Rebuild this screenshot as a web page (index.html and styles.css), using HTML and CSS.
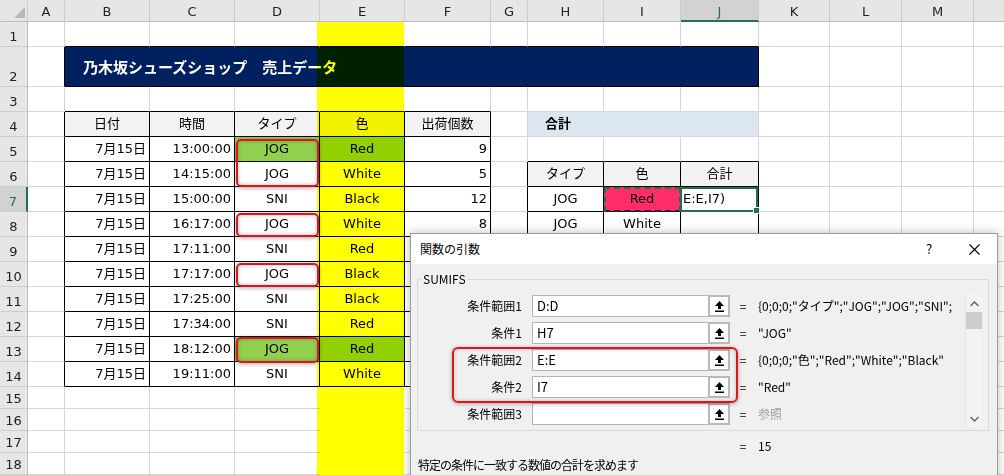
FILE: index.html
```html
<!DOCTYPE html>
<html>
<head>
    <meta charset="utf-8">
    <title>売上データ</title>
    <link rel="stylesheet" href="styles.css">
</head>
<body>
    <table class="sheet">
        <colgroup>
            <col class="w-rh"><col class="w-a"><col class="w-b"><col class="w-b"><col class="w-b"><col class="w-b"><col class="w-f">
            <col class="w-a"><col class="w-h"><col class="w-i"><col class="w-j"><col class="w-k"><col class="w-l"><col class="w-l"><col class="w-l">
        </colgroup>
        <tr class="colhdr">
            <th class="corner"><svg width="11" height="11" viewBox="0 0 11 11"><polygon points="11,0 11,11 0,11" fill="#b8b8b8"/></svg></th>
            <th>A</th><th>B</th><th>C</th><th>D</th><th>E</th><th>F</th><th>G</th><th>H</th><th>I</th><th class="sel">J</th><th>K</th><th>L</th><th>M</th><th></th>
        </tr>
        <tr>
            <th class="rh">1</th>
            <td></td><td class="bb"></td><td class="bb"></td><td class="bb nr"></td><td class="bb nr"></td><td class="bb"></td><td class="bb"></td><td class="bb"></td><td class="bb"></td><td class="bb"></td><td></td><td></td><td></td><td></td>
        </tr>
        <tr class="tall">
            <th class="rh">2</th>
            <td class="br"></td><td class="title" colspan="9">乃木坂シューズショップ　売上データ</td><td></td><td></td><td></td><td></td>
        </tr>
        <tr>
            <th class="rh">3</th>
            <td></td><td class="bb"></td><td class="bb"></td><td class="bb nr"></td><td class="bb nr"></td><td class="bb"></td><td></td><td></td><td></td><td></td><td></td><td></td><td></td><td></td>
        </tr>
        <tr>
            <th class="rh">4</th>
            <td class="br"></td><td class="hd bx">日付</td><td class="hd bx">時間</td><td class="hd bx">タイプ</td><td class="hd bx">色</td><td class="hd bx">出荷個数</td><td></td>
            <td class="sum" colspan="3">合計</td><td></td><td></td><td></td><td></td>
        </tr>
        <tr>
            <th class="rh">5</th>
            <td class="br"></td><td class="r bx">7月15日</td><td class="r bx">13:00:00</td><td class="c bx green">JOG</td><td class="c bx green">Red</td><td class="r bx">9</td><td></td>
            <td class="bb"></td><td class="bb"></td><td class="bb"></td><td></td><td></td><td></td><td></td>
        </tr>
        <tr>
            <th class="rh">6</th>
            <td class="br"></td><td class="r bx">7月15日</td><td class="r bx">14:15:00</td><td class="c bx">JOG</td><td class="c bx">White</td><td class="r bx">5</td><td class="br"></td>
            <td class="hd bx">タイプ</td><td class="hd bx">色</td><td class="hd bx">合計</td><td></td><td></td><td></td><td></td>
        </tr>
        <tr>
            <th class="rh sel">7</th>
            <td class="br"></td><td class="r bx">7月15日</td><td class="r bx">15:00:00</td><td class="c bx">SNI</td><td class="c bx">Black</td><td class="r bx">12</td><td class="br"></td>
            <td class="c bx">JOG</td><td class="c bx pink">Red</td><td class="bx edit">E:E,I7)</td><td></td><td></td><td></td><td></td>
        </tr>
        <tr>
            <th class="rh">8</th>
            <td class="br"></td><td class="r bx">7月15日</td><td class="r bx">16:17:00</td><td class="c bx">JOG</td><td class="c bx">White</td><td class="r bx">8</td><td class="br"></td>
            <td class="c bx">JOG</td><td class="c bx">White</td><td class="bx"></td><td></td><td></td><td></td><td></td>
        </tr>
        <tr>
            <th class="rh">9</th>
            <td class="br"></td><td class="r bx">7月15日</td><td class="r bx">17:11:00</td><td class="c bx">SNI</td><td class="c bx">Red</td><td class="r bx"></td><td></td>
            <td></td><td></td><td></td><td></td><td></td><td></td><td></td>
        </tr>
        <tr>
            <th class="rh">10</th>
            <td class="br"></td><td class="r bx">7月15日</td><td class="r bx">17:17:00</td><td class="c bx">JOG</td><td class="c bx">Black</td><td class="r bx"></td><td></td>
            <td></td><td></td><td></td><td></td><td></td><td></td><td></td>
        </tr>
        <tr>
            <th class="rh">11</th>
            <td class="br"></td><td class="r bx">7月15日</td><td class="r bx">17:25:00</td><td class="c bx">SNI</td><td class="c bx">Black</td><td class="r bx"></td><td></td>
            <td></td><td></td><td></td><td></td><td></td><td></td><td></td>
        </tr>
        <tr>
            <th class="rh">12</th>
            <td class="br"></td><td class="r bx">7月15日</td><td class="r bx">17:34:00</td><td class="c bx">SNI</td><td class="c bx">Red</td><td class="r bx"></td><td></td>
            <td></td><td></td><td></td><td></td><td></td><td></td><td></td>
        </tr>
        <tr>
            <th class="rh">13</th>
            <td class="br"></td><td class="r bx">7月15日</td><td class="r bx">18:12:00</td><td class="c bx green">JOG</td><td class="c bx green">Red</td><td class="r bx"></td><td></td>
            <td></td><td></td><td></td><td></td><td></td><td></td><td></td>
        </tr>
        <tr>
            <th class="rh">14</th>
            <td class="br"></td><td class="r bx">7月15日</td><td class="r bx">19:11:00</td><td class="c bx">SNI</td><td class="c bx">White</td><td class="r bx"></td><td></td>
            <td></td><td></td><td></td><td></td><td></td><td></td><td></td>
        </tr>
        <tr class="short">
            <th class="rh">15</th>
            <td></td><td></td><td></td><td class="nr"></td><td class="ng"></td><td></td><td></td><td></td><td></td><td></td><td></td><td></td><td></td><td></td>
        </tr>
        <tr class="short">
            <th class="rh">16</th>
            <td></td><td></td><td></td><td class="nr"></td><td class="ng"></td><td></td><td></td><td></td><td></td><td></td><td></td><td></td><td></td><td></td>
        </tr>
        <tr class="short">
            <th class="rh">17</th>
            <td></td><td></td><td></td><td class="nr"></td><td class="ng"></td><td></td><td></td><td></td><td></td><td></td><td></td><td></td><td></td><td></td>
        </tr>
        <tr class="short">
            <th class="rh">18</th>
            <td></td><td></td><td></td><td class="nr"></td><td class="ng"></td><td></td><td></td><td></td><td></td><td></td><td></td><td></td><td></td><td></td>
        </tr>
    </table>

    <!-- highlight of column E -->
    <div class="marker"></div>

    <!-- red callouts on JOG -->
    <div class="callout c1"></div>
    <div class="callout c2"></div>
    <div class="callout c3"></div>
    <div class="callout c4"></div>

    <div class="marquee"></div>
    <div class="active"><span class="handle"></span></div>

    <div class="dialog">
        <div class="dlg-title">
            <span class="name">関数の引数</span>
            <span class="help">?</span>
            <span class="close">
                <svg width="11" height="11" viewBox="0 0 11 11"><path d="M0.5 0.5 L10.5 10.5 M10.5 0.5 L0.5 10.5" stroke="#000" stroke-width="1.1"/></svg>
            </span>
        </div>
        <div class="dlg-body">
            <fieldset class="group">
                <legend>SUMIFS</legend>
                <div class="args">
                    <div class="arg-list">
                        <div class="arg">
                            <label>条件範囲1</label>
                            <div class="ref"><span class="ref-text">D:D</span><span class="ref-btn"><svg width="9" height="11" viewBox="0 0 9 11"><path d="M4.5 0 L9 5 L6 5 L6 8 L3 8 L3 5 L0 5 Z M0 9.5 H9 V11 H0 Z" fill="#000"/></svg></span></div>
                            <span class="eq">=</span>
                            <span class="val">{0;0;0;"タイプ";"JOG";"JOG";"SNI";</span>
                        </div>
                        <div class="arg">
                            <label>条件1</label>
                            <div class="ref"><span class="ref-text">H7</span><span class="ref-btn"><svg width="9" height="11" viewBox="0 0 9 11"><path d="M4.5 0 L9 5 L6 5 L6 8 L3 8 L3 5 L0 5 Z M0 9.5 H9 V11 H0 Z" fill="#000"/></svg></span></div>
                            <span class="eq">=</span>
                            <span class="val">"JOG"</span>
                        </div>
                        <div class="arg">
                            <label>条件範囲2</label>
                            <div class="ref"><span class="ref-text">E:E</span><span class="ref-btn"><svg width="9" height="11" viewBox="0 0 9 11"><path d="M4.5 0 L9 5 L6 5 L6 8 L3 8 L3 5 L0 5 Z M0 9.5 H9 V11 H0 Z" fill="#000"/></svg></span></div>
                            <span class="eq">=</span>
                            <span class="val">{0;0;0;"色";"Red";"White";"Black"</span>
                        </div>
                        <div class="arg">
                            <label>条件2</label>
                            <div class="ref"><span class="ref-text">I7</span><span class="ref-btn"><svg width="9" height="11" viewBox="0 0 9 11"><path d="M4.5 0 L9 5 L6 5 L6 8 L3 8 L3 5 L0 5 Z M0 9.5 H9 V11 H0 Z" fill="#000"/></svg></span></div>
                            <span class="eq">=</span>
                            <span class="val">"Red"</span>
                        </div>
                        <div class="arg">
                            <label>条件範囲3</label>
                            <div class="ref"><span class="ref-text"></span><span class="ref-btn"><svg width="9" height="11" viewBox="0 0 9 11"><path d="M4.5 0 L9 5 L6 5 L6 8 L3 8 L3 5 L0 5 Z M0 9.5 H9 V11 H0 Z" fill="#000"/></svg></span></div>
                            <span class="eq">=</span>
                            <span class="val muted">参照</span>
                        </div>
                    </div>
                    <div class="vscroll">
                        <svg class="arrow" width="9" height="6" viewBox="0 0 9 6"><path d="M0.5 5 L4.5 1 L8.5 5" fill="none" stroke="#606060" stroke-width="1.3"/></svg>
                        <div class="thumb"></div>
                        <div class="track"></div>
                        <svg class="arrow" width="9" height="6" viewBox="0 0 9 6"><path d="M0.5 1 L4.5 5 L8.5 1" fill="none" stroke="#606060" stroke-width="1.3"/></svg>
                    </div>
                </div>
            </fieldset>
            <div class="result"><span class="eq">=</span><span class="val">15</span></div>
            <p class="desc">特定の条件に一致する数値の合計を求めます</p>
        </div>
        <div class="dlg-hl"></div>
    </div>
</body>
</html>
```

FILE: styles.css
```css
body {
    margin: 0;
    width: 1004px;
    height: 475px;
    overflow: hidden;
    position: relative;
    background: #fff;
    font-family: "Noto Sans CJK JP", "Noto Sans", sans-serif;
    color: #000;
}

/* ---- worksheet ---- */

.sheet {
    border-collapse: separate;
    border-spacing: 0;
    table-layout: fixed;
    width: 1046px;
    font-family: "DejaVu Sans", "Noto Sans CJK JP", sans-serif;
}

.w-rh { width: 28px; }
.w-a { width: 37px; }
.w-b { width: 85px; }
.w-f { width: 86px; }
.w-h { width: 76px; }
.w-i { width: 77px; }
.w-j { width: 78px; }
.w-k { width: 71px; }
.w-l { width: 72px; }

.sheet tr { height: 25px; }
.sheet tr.colhdr { height: 22px; }
.sheet tr.tall { height: 40px; }
.sheet tr.short { height: 22px; }

.sheet td {
    box-sizing: border-box;
    padding: 0 3px;
    border-right: 1px solid #d4d4d4;
    border-bottom: 1px solid #d4d4d4;
    font-size: 13px;
    line-height: 16px;
    white-space: nowrap;
    overflow: hidden;
    vertical-align: middle;
}

.colhdr th {
    box-sizing: border-box;
    padding: 3px 0 0;
    background: #e6e6e6;
    border-right: 1px solid #cdcdcd;
    border-bottom: 1px solid #bdbdbd;
    font-size: 13px;
    font-weight: normal;
    line-height: 16px;
    color: #222;
}

.colhdr th.sel {
    background: #d2d2d2;
    color: #217346;
    border-bottom: 2px solid #217346;
}

.colhdr th.corner {
    text-align: right;
    vertical-align: bottom;
    padding: 0 2px 3px 0;
}

.corner svg { display: block; margin-left: auto; }

.rh {
    box-sizing: border-box;
    padding: 0 0 1px;
    background: #e6e6e6;
    border-right: 1px solid #bdbdbd;
    border-bottom: 1px solid #cdcdcd;
    font-size: 13px;
    font-weight: normal;
    line-height: 16px;
    color: #222;
    text-align: center;
    vertical-align: bottom;
}

.rh.sel {
    background: #d2d2d2;
    color: #217346;
    border-right: 2px solid #217346;
}

.sheet td.r { text-align: right; }
.sheet td.c { text-align: center; }

.sheet td.bx { border-right-color: #000; border-bottom-color: #000; }
.sheet td.br { border-right-color: #000; }
.sheet td.bb { border-bottom-color: #000; }
.sheet td.nr { border-right-color: transparent; }
.sheet td.ng { border-right-color: transparent; border-bottom-color: transparent; }

.sheet td.hd {
    background: #f2f2f2;
    text-align: center;
}

.sheet td.green { background: #92d050; }
.sheet td.pink { background: #ff2d6a; }
.sheet td.edit { padding-left: 2px; }

.sheet td.title {
    background: #002060;
    color: #fff;
    font-family: "Noto Sans CJK JP", sans-serif;
    font-size: 15px;
    font-weight: bold;
    padding-left: 18px;
    border-right-color: #000;
    border-bottom-color: #000;
}

.sheet td.sum {
    background: #dce6f1;
    font-weight: bold;
    padding-left: 17px;
}

/* ---- things drawn over the grid ---- */

.marker {
    position: absolute;
    left: 317px;
    top: 22px;
    width: 87px;
    height: 453px;
    background: #ffff00;
    mix-blend-mode: multiply;
    pointer-events: none;
}

.callout {
    position: absolute;
    left: 236px;
    width: 83px;
    box-sizing: border-box;
    border: 2px solid #e3131c;
    border-radius: 5px;
    box-shadow: 0 1px 4px rgba(0, 0, 0, 0.35), inset 0 0 4px rgba(0, 0, 0, 0.25);
}

.c1 { top: 139px; height: 48px; }
.c2 { top: 213px; height: 24px; }
.c3 { top: 263px; height: 24px; }
.c4 { top: 337px; height: 26px; }

.marquee {
    position: absolute;
    left: 604px;
    top: 187px;
    width: 77px;
    height: 25px;
    box-sizing: border-box;
    border: 2px dashed #217346;
    border-bottom-color: #222;
}

.active {
    position: absolute;
    left: 680px;
    top: 187px;
    width: 78px;
    height: 25px;
    box-sizing: border-box;
    border: 2px solid #217346;
}

.handle {
    position: absolute;
    right: -4px;
    bottom: -4px;
    width: 5px;
    height: 5px;
    background: #217346;
    border: 1px solid #fff;
}

/* ---- function arguments dialog ---- */

.dialog {
    position: absolute;
    left: 410px;
    top: 233px;
    width: 588px;
    height: 260px;
    box-sizing: border-box;
    background: #f0f0f0;
    border: 1px solid #9a9a9a;
    box-shadow: 0 0 10px rgba(0, 0, 0, 0.25);
    font-size: 12px;
    line-height: 16px;
}

.dlg-title {
    display: flex;
    align-items: center;
    height: 30px;
    padding-left: 9px;
    background: #fff;
}

.dlg-title .name { flex: 1; }

.help {
    width: 24px;
    margin-right: 10px;
    text-align: center;
    font-size: 13px;
}

.close {
    width: 46px;
    height: 30px;
    display: flex;
    align-items: center;
    justify-content: center;
}

.dlg-body {
    padding: 7px 8px 0 6px;
}

.group {
    margin: 0;
    padding: 0;
    border: 1px solid #d9d9d9;
}

.group legend {
    margin-left: 3px;
    padding: 0 2px;
    line-height: 16px;
}

.args {
    display: flex;
    padding: 8px 6px 3px 0;
}

.arg-list {
    flex: 1;
    min-width: 0;
    display: flex;
    flex-direction: column;
    gap: 5px;
    margin-right: 10px;
}

.arg {
    display: flex;
    align-items: center;
    height: 22px;
}

.arg label {
    width: 104px;
    margin-right: 10px;
    text-align: right;
}

.ref {
    display: flex;
    width: 198px;
    height: 22px;
}

.ref-text {
    flex: 1;
    box-sizing: border-box;
    padding: 0 4px;
    background: #fff;
    border: 1px solid #b5b5b5;
    border-right: none;
    font-size: 13px;
    line-height: 20px;
}

.ref-btn {
    width: 22px;
    height: 22px;
    box-sizing: border-box;
    border: 2px solid #b9b9b9;
    background: #fff;
    display: flex;
    align-items: center;
    justify-content: center;
}

.eq {
    width: 26px;
    text-align: center;
}

.val {
    flex: 1;
    min-width: 0;
    padding-left: 2px;
    white-space: nowrap;
    overflow: hidden;
}

.val.muted { color: #a0a0a0; }

.vscroll {
    width: 16px;
    height: 132px;
    display: flex;
    flex-direction: column;
    align-items: center;
    background: #f3f3f3;
    border-left: 1px solid #e4e4e4;
}

.vscroll .arrow { margin: 6px 0 5px; }

.thumb {
    width: 16px;
    height: 17px;
    background: #cdcdcd;
}

.track { flex: 1; }

.result {
    display: flex;
    margin: 7px 0 0 313px;
}

.result .val { padding-left: 2px; }

.desc {
    margin: 3px 0 0 1px;
    letter-spacing: -1px;
}

.dlg-hl {
    position: absolute;
    left: 41px;
    top: 113px;
    width: 286px;
    height: 56px;
    box-sizing: border-box;
    border: 2px solid #e3131c;
    border-radius: 6px;
    box-shadow: 0 1px 4px rgba(0, 0, 0, 0.3), inset 0 0 4px rgba(0, 0, 0, 0.2);
}
```
